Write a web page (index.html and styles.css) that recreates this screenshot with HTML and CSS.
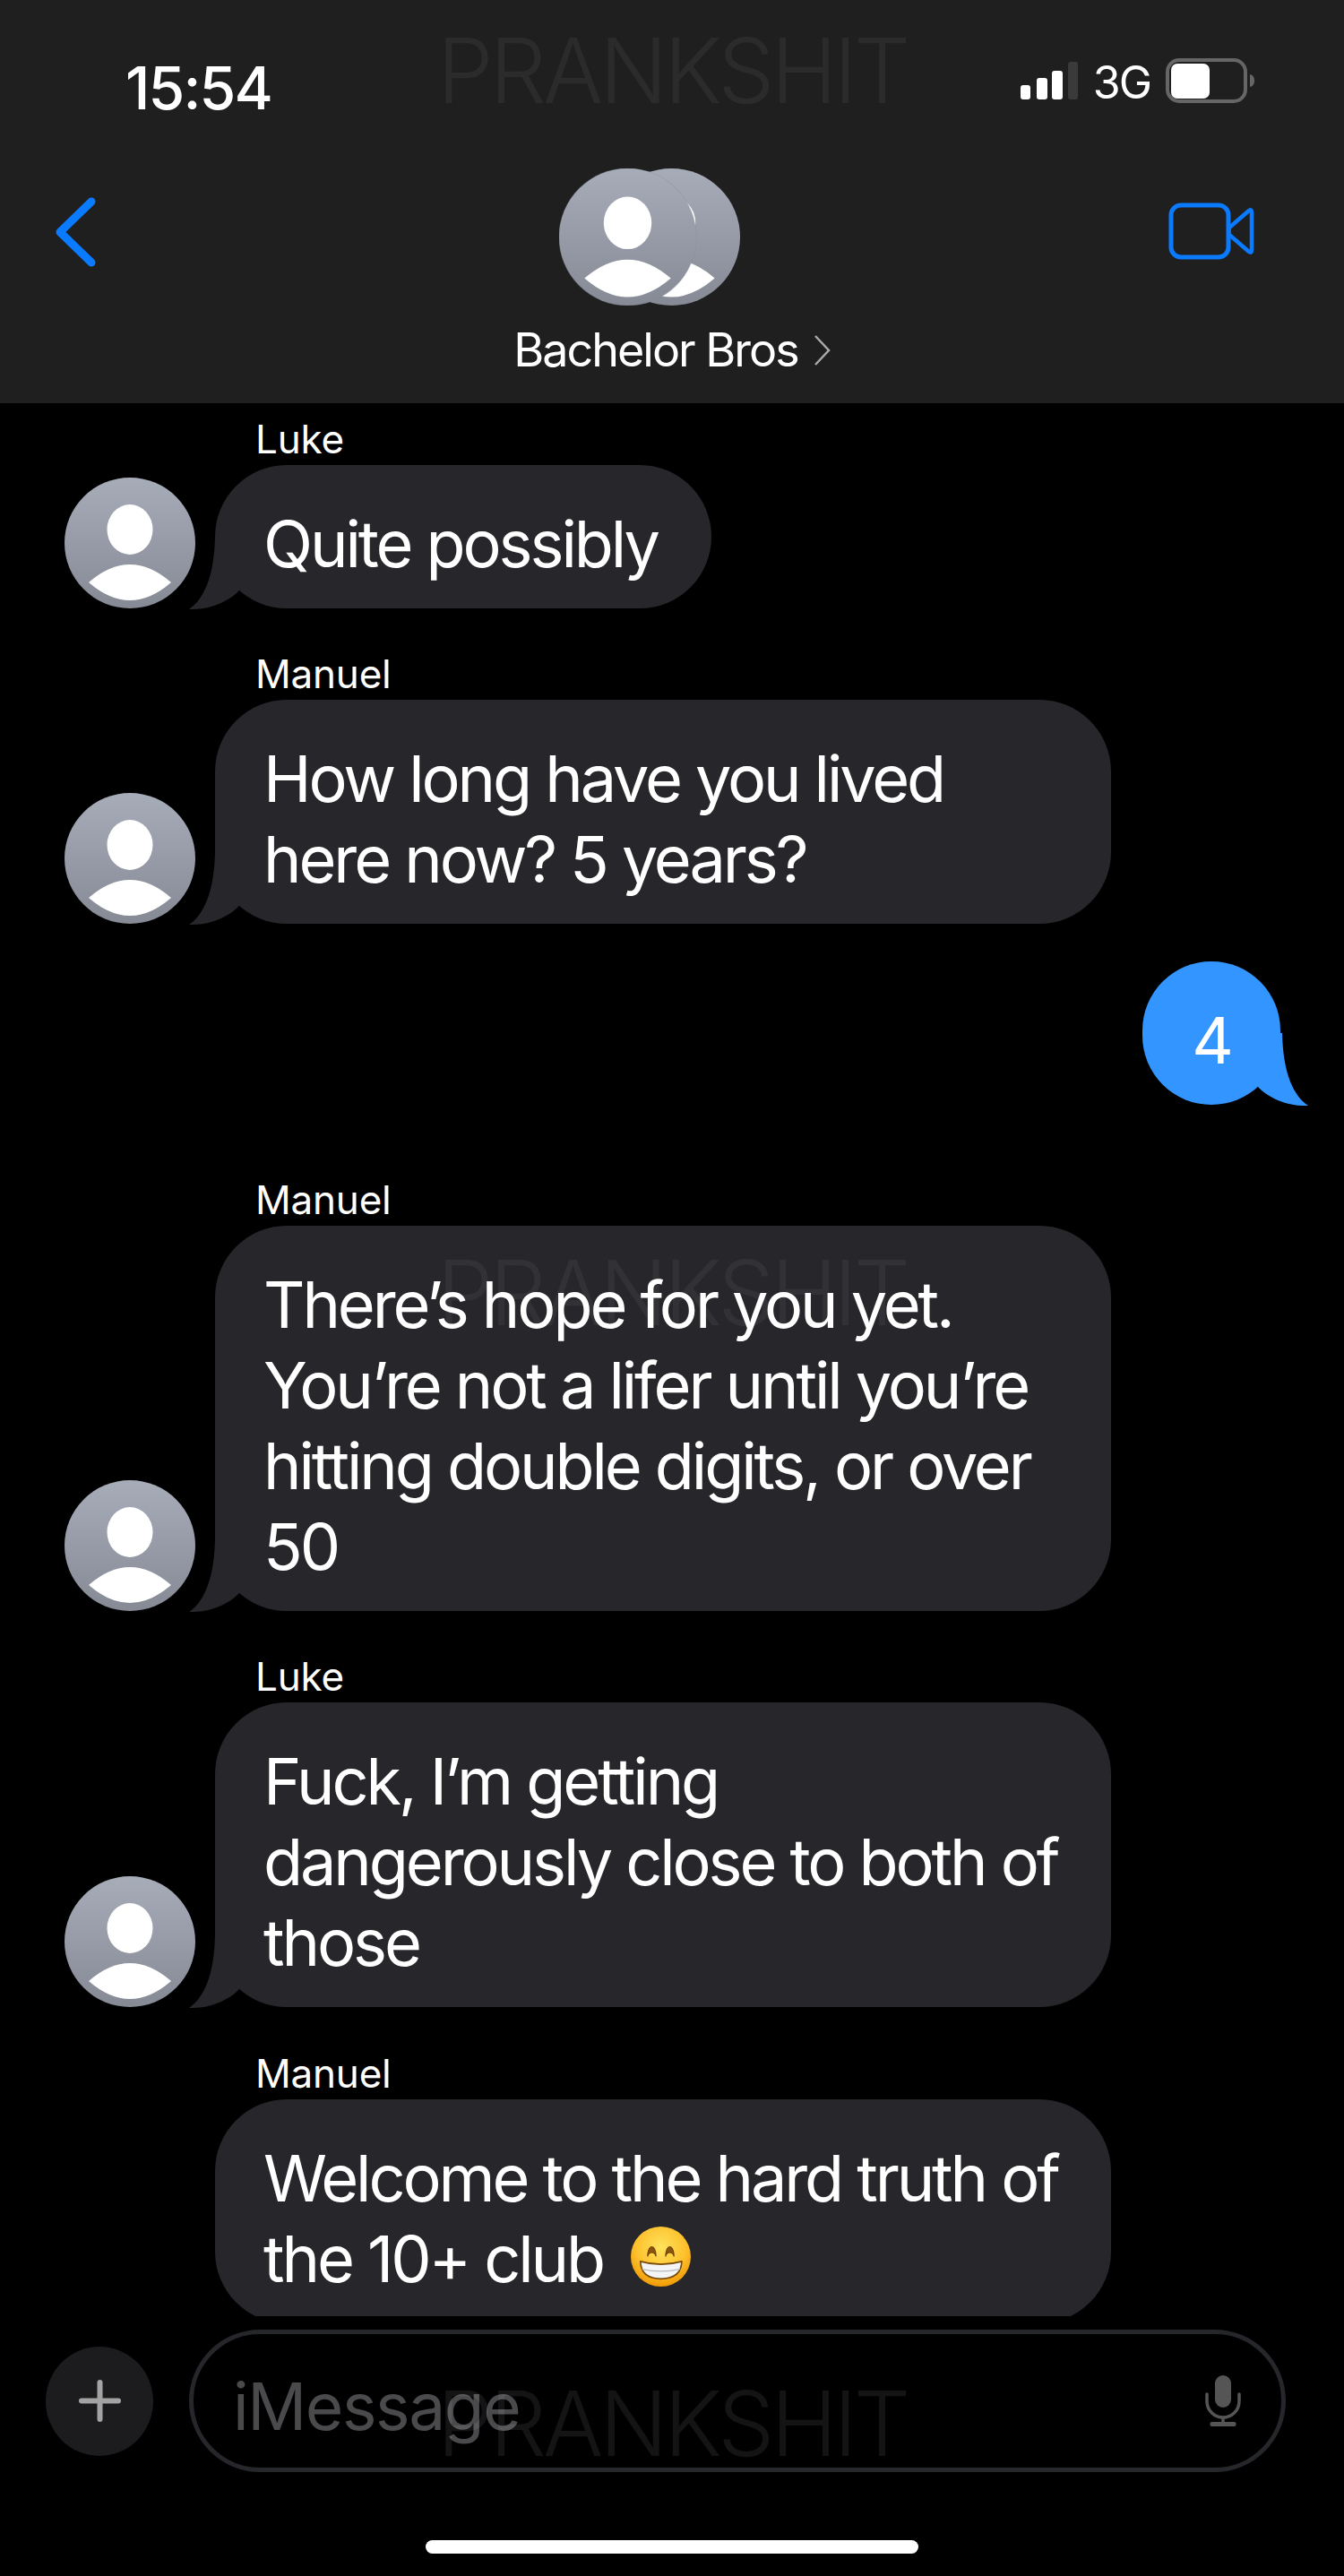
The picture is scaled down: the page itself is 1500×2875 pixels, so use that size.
FILE: index.html
```html
<!DOCTYPE html>
<html lang="en">
<head>
  <meta charset="UTF-8">
  <meta name="viewport" content="width=device-width, initial-scale=1.0">
  <title>Bachelor Bros</title>
  <link rel="stylesheet" href="styles.css">
</head>
<body>
  <svg class="defs" width="0" height="0">
    <defs>
      <linearGradient id="avatar-grad" x1="0" y1="0" x2="0" y2="1">
        <stop offset="0" stop-color="#a7acb9"/>
        <stop offset="1" stop-color="#858a95"/>
      </linearGradient>
      <radialGradient id="emoji-grad" cx="0.5" cy="0.35" r="0.65">
        <stop offset="0" stop-color="#ffe35c"/>
        <stop offset="0.65" stop-color="#fdc02c"/>
        <stop offset="1" stop-color="#f09a05"/>
      </radialGradient>
      <symbol id="avatar" viewBox="0 0 146 146">
        <circle cx="73" cy="73" r="73" fill="url(#avatar-grad)"/>
        <ellipse cx="73" cy="58" rx="25.5" ry="28" fill="#fff"/>
        <path d="M27 117 Q73 77 119 117 Q73 157 27 117Z" fill="#fff"/>
      </symbol>
      <symbol id="tail" viewBox="0 0 70 90">
        <path d="M6 85 C22 74 34 50 35 4 L70 4 L62 64 C50 77 28 86 6 85Z"/>
      </symbol>
    </defs>
  </svg>

  <div class="screen">
    <header class="top">
      <div class="status">
        <span class="time">15:54</span>
        <div class="status-icons">
          <svg class="signal" width="64" height="42" viewBox="0 0 64 42">
            <rect x="0" y="26" width="11" height="16" rx="3" fill="#fff"/>
            <rect x="18" y="18" width="12" height="24" rx="3" fill="#fff"/>
            <rect x="35" y="10" width="12" height="32" rx="3" fill="#fff"/>
            <rect x="53" y="0" width="11" height="42" rx="3" fill="#3a3a3a"/>
          </svg>
          <span class="net">3G</span>
          <svg class="battery" width="99" height="50" viewBox="0 0 99 50">
            <rect x="2" y="2" width="87" height="46" rx="13" fill="none" stroke="#666" stroke-width="4"/>
            <rect x="6" y="6" width="43" height="39" rx="7" fill="#fff"/>
            <path d="M94 18 C98 19 99 22 99 25 C99 28 98 31 94 32Z" fill="#666"/>
          </svg>
        </div>
      </div>
      <div class="nav">
        <svg class="back" width="45" height="78" viewBox="0 0 45 78">
          <path d="M40 5 L5 39 L40 73" fill="none" stroke="#0a7aff" stroke-width="9" stroke-linecap="round" stroke-linejoin="round"/>
        </svg>
        <div class="contact">
          <svg class="group-pic" width="202" height="153" viewBox="0 0 202 153">
            <use href="#avatar" x="49" y="0" width="153" height="153"/>
            <circle cx="76.5" cy="76.5" r="77" fill="#7f8490" opacity="0.45"/>
            <use href="#avatar" x="0" y="0" width="153" height="153"/>
          </svg>
          <div class="title">
            <span>Bachelor Bros</span>
            <svg width="19" height="36" viewBox="0 0 19 36">
              <path d="M2 2 L17 18 L2 34" fill="none" stroke="#aaa" stroke-width="2.5"/>
            </svg>
          </div>
        </div>
        <svg class="video" width="96" height="64" viewBox="0 0 96 64">
          <rect x="3" y="3" width="64" height="58" rx="11" fill="none" stroke="#0a7aff" stroke-width="5"/>
          <path d="M68 28 L90 9 Q93 7 93 11 V53 Q93 57 90 55 L68 36 Q67 32 68 28Z" fill="none" stroke="#0a7aff" stroke-width="4.5" stroke-linejoin="round"/>
        </svg>
      </div>
    </header>

    <main class="thread">
      <div class="msg msg-first">
        <svg class="avatar"><use href="#avatar"/></svg>
        <div class="msg-body">
          <div class="sender">Luke</div>
          <div class="bubble bubble-short">Quite possibly<svg class="tail"><use href="#tail"/></svg></div>
        </div>
      </div>

      <div class="msg">
        <svg class="avatar"><use href="#avatar"/></svg>
        <div class="msg-body">
          <div class="sender">Manuel</div>
          <div class="bubble bubble-wide">How long have you lived<br>here now? 5 years?<svg class="tail"><use href="#tail"/></svg></div>
        </div>
      </div>

      <div class="msg-me">
        <div class="bubble bubble-me">4<svg class="tail tail-me"><use href="#tail"/></svg></div>
      </div>

      <div class="msg msg-after-me">
        <svg class="avatar"><use href="#avatar"/></svg>
        <div class="msg-body">
          <div class="sender">Manuel</div>
          <div class="bubble bubble-wide">There’s hope for you yet.<br>You’re not a lifer until you’re<br>hitting double digits, or over<br>50<svg class="tail"><use href="#tail"/></svg></div>
        </div>
      </div>

      <div class="msg">
        <svg class="avatar"><use href="#avatar"/></svg>
        <div class="msg-body">
          <div class="sender">Luke</div>
          <div class="bubble bubble-wide">Fuck, I’m getting<br>dangerously close to both of<br>those<svg class="tail"><use href="#tail"/></svg></div>
        </div>
      </div>

      <div class="msg msg-last">
        <div class="avatar-gap"></div>
        <div class="msg-body">
          <div class="sender">Manuel</div>
          <div class="bubble bubble-wide">Welcome to the hard truth of<br>the 10+ club
            <svg class="emoji" viewBox="0 0 100 100">
              <circle cx="50" cy="50" r="50" fill="url(#emoji-grad)"/>
              <path d="M28 50 C28 28 42 28 42 50 C40 41 30 41 28 50Z" fill="#8a560c" stroke="#6e4208" stroke-width="1.5"/>
              <path d="M58 50 C58 28 72 28 72 50 C70 41 60 41 58 50Z" fill="#8a560c" stroke="#6e4208" stroke-width="1.5"/>
              <path d="M16 58 Q50 68 85 58 Q84 87 50 87 Q17 87 16 58Z" fill="#f4f5f6" stroke="#7a4a08" stroke-width="2.5" stroke-linejoin="round"/>
              <path d="M19 71 Q50 78 82 71" fill="none" stroke="#b9bcc0" stroke-width="2"/>
            </svg>
          </div>
        </div>
      </div>
    </main>

    <footer class="composer">
      <div class="input-row">
        <div class="plus">
          <svg width="47" height="47" viewBox="0 0 47 47">
            <path d="M23.5 3 V44 M3 23.5 H44" stroke="#a3a3a3" stroke-width="6" stroke-linecap="round"/>
          </svg>
        </div>
        <div class="input-pill">
          <span class="placeholder">iMessage</span>
          <svg class="mic" width="40" height="57" viewBox="0 0 40 57">
            <rect x="11" y="0" width="18" height="36" rx="9" fill="#555"/>
            <path d="M2 21 V29 A18 18 0 0 0 38 29 V21" fill="none" stroke="#555" stroke-width="3.5" stroke-linecap="round"/>
            <path d="M20 47 V53" stroke="#555" stroke-width="3.5"/>
            <rect x="5.5" y="52" width="29" height="5" rx="2" fill="#555"/>
          </svg>
        </div>
      </div>
      <div class="home-bar"></div>
    </footer>

    <div class="watermark wm-top">PRANKSHIT</div>
    <div class="watermark wm-mid">PRANKSHIT</div>
    <div class="watermark wm-bottom">PRANKSHIT</div>
  </div>
</body>
</html>
```

FILE: styles.css
```css
body {
  margin: 0;
  padding: 0;
  background-color: #000;
  color: #fff;
  font-family: Inter, "Liberation Sans", sans-serif;
}

.defs {
  position: absolute;
}

.screen {
  position: relative;
  width: 1500px;
  height: 2875px;
  overflow: hidden;
}

/* header */
.top {
  height: 450px;
  background-color: #1f1f1f;
}

.status {
  display: flex;
  justify-content: space-between;
  align-items: flex-start;
  box-sizing: border-box;
  height: 140px;
  padding: 58px 100px 0 140px;
}

.time {
  font-size: 66px;
  line-height: 80px;
  font-weight: 500;
  letter-spacing: -1.9px;
}

.status-icons {
  display: flex;
  align-items: flex-start;
  gap: 17px;
  margin-top: 7px;
}

.signal {
  margin-top: 4px;
}

.net {
  font-size: 50px;
  line-height: 60px;
  margin-top: -3px;
  letter-spacing: -2px;
}

.nav {
  display: grid;
  grid-template-columns: 1fr auto 1fr;
  align-items: start;
}

.back {
  margin: 80px 0 0 62px;
}

.video {
  justify-self: end;
  margin: 86px 100px 0 0;
}

.contact {
  display: flex;
  flex-direction: column;
  align-items: center;
  padding-top: 48px;
}

.group-pic {
  margin-right: 51px;
}

.title {
  display: flex;
  align-items: center;
  gap: 17px;
  margin-top: 19px;
  font-size: 52px;
  line-height: 62px;
  letter-spacing: -2px;
}

/* messages */
.thread {
  height: 2135px;
  overflow: hidden;
  padding-top: 17px;
  box-sizing: border-box;
}

.msg {
  display: flex;
  align-items: flex-end;
  gap: 22px;
  padding-left: 72px;
  margin-top: 50px;
}

.msg-first {
  margin-top: 0;
}

.msg-after-me {
  margin-top: 83px;
}

.msg-last {
  margin-top: 51px;
}

.avatar {
  width: 146px;
  height: 146px;
  flex-shrink: 0;
}

.avatar-gap {
  width: 146px;
  flex-shrink: 0;
}

.sender {
  font-size: 44px;
  line-height: 46px;
  margin-bottom: 6px;
  padding-left: 45px;
  letter-spacing: -0.2px;
}

.bubble {
  position: relative;
  box-sizing: border-box;
  width: fit-content;
  padding: 43px 55px 27px 54px;
  border-radius: 80px;
  background-color: #27272b;
  fill: #27272b;
  font-size: 72px;
  line-height: 90px;
  letter-spacing: -3.1px;
  white-space: nowrap;
}

.bubble-short {
  width: 554px;
}

.bubble-wide {
  width: 1000px;
}

.tail {
  position: absolute;
  left: -35px;
  bottom: -6px;
  width: 70px;
  height: 90px;
}

.msg-me {
  display: flex;
  justify-content: flex-end;
  margin-top: 42px;
  padding-right: 71px;
}

.bubble-me {
  width: 154px;
  padding: 43px 0 27px;
  background-color: #3395ff;
  fill: #3395ff;
  text-align: center;
}

.tail-me {
  left: auto;
  right: -37px;
  transform: scaleX(-1);
}

.emoji {
  width: 69px;
  height: 67px;
  margin-left: 13px;
  vertical-align: -5px;
}

/* bottom bar */
.composer {
  height: 290px;
}

.input-row {
  display: flex;
  align-items: center;
  gap: 40px;
  padding: 15px 65px 0 51px;
}

.plus {
  display: flex;
  align-items: center;
  justify-content: center;
  width: 120px;
  height: 122px;
  border-radius: 50%;
  background-color: #1c1c1e;
}

.input-pill {
  flex: 1;
  display: flex;
  align-items: center;
  justify-content: space-between;
  box-sizing: border-box;
  height: 159px;
  padding: 0 45px 0 44px;
  border: 5px solid #26272a;
  border-radius: 80px;
}

.placeholder {
  padding-top: 12px;
  font-size: 73px;
  line-height: 90px;
  color: #4a4a4d;
  letter-spacing: -1.4px;
}

.home-bar {
  width: 550px;
  height: 15px;
  margin: 76px auto 0;
  border-radius: 8px;
  background-color: #fff;
}

/* stamped over the whole screenshot */
.watermark {
  position: absolute;
  left: 0;
  right: 0;
  text-align: center;
  font-size: 100px;
  line-height: 120px;
  font-weight: 300;
  letter-spacing: -4px;
  color: rgba(255, 255, 255, 0.055);
  pointer-events: none;
}

.wm-top {
  top: 19px;
}

.wm-mid {
  top: 1383px;
}

.wm-bottom {
  top: 2645px;
  color: rgba(255, 255, 255, 0.08);
}
```
